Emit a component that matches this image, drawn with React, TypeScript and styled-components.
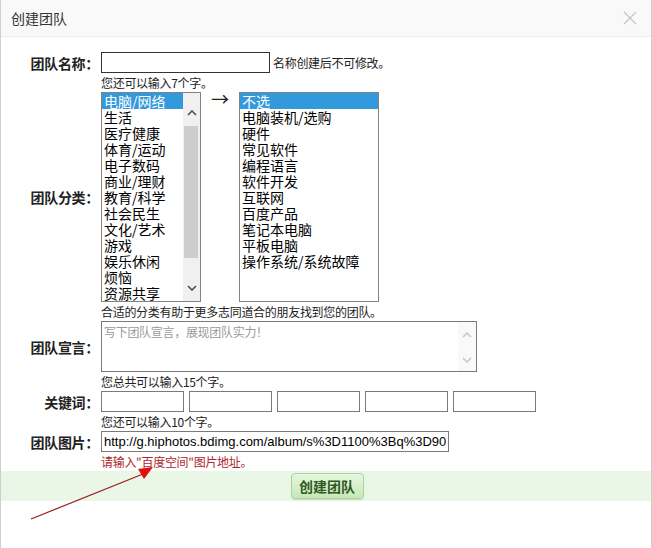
import React from "react";
import styled, { createGlobalStyle } from "styled-components";

const GlobalStyle = createGlobalStyle`
  html, body {
    margin: 0;
    padding: 0;
    background: #fff;
  }
  body {
    font-family: "Noto Sans CJK SC", "Liberation Sans", sans-serif;
    color: #000;
  }
`;

const leftItems = [
  "电脑/网络",
  "生活",
  "医疗健康",
  "体育/运动",
  "电子数码",
  "商业/理财",
  "教育/科学",
  "社会民生",
  "文化/艺术",
  "游戏",
  "娱乐休闲",
  "烦恼",
  "资源共享",
];

const rightItems = [
  "不选",
  "电脑装机/选购",
  "硬件",
  "常见软件",
  "编程语言",
  "软件开发",
  "互联网",
  "百度产品",
  "笔记本电脑",
  "平板电脑",
  "操作系统/系统故障",
];

const Dialog = styled.div`
  position: relative;
  width: 650px;
  min-height: 548px;
  border-left: 1px solid #cfcfcf;
  border-right: 1px solid #cfcfcf;
  background: #fff;
`;

const Header = styled.div`
  height: 36px;
  display: flex;
  align-items: center;
  justify-content: space-between;
  padding: 0 10px;
  background: #f9f9f9;
  border-bottom: 1px solid #ebebeb;
`;

const Title = styled.div`
  font-size: 14px;
  color: #333;
`;

const Close = styled.svg`
  width: 14px;
  height: 14px;
  margin-right: 4px;
`;

const Form = styled.div`
  display: grid;
  grid-template-columns: 100px auto;
  padding-top: 15px;
`;

const Label = styled.div`
  grid-column: 1;
  align-self: center;
  text-align: right;
  padding-right: 2px;
  font-size: 14px;
  font-weight: bold;
  color: #222;
  letter-spacing: -0.3px;
`;

const Cell = styled.div`
  grid-column: 2;
  display: flex;
  align-items: center;
`;

const Hint = styled.div<{ $error?: boolean }>`
  grid-column: 2;
  height: 19px;
  line-height: 19px;
  font-size: 12px;
  color: ${(p) => (p.$error ? "#b0262b" : "#222")};
  letter-spacing: -0.3px;
`;

const TextInput = styled.input<{ $w: number; $dark?: boolean }>`
  box-sizing: border-box;
  width: ${(p) => p.$w}px;
  height: 21px;
  margin: 0;
  padding: 0 2px;
  border: 1px solid ${(p) => (p.$dark ? "#333" : "#7a7a7a")};
  border-radius: 0;
  outline: none;
  font-family: "Liberation Sans", Arial, sans-serif;
  font-size: 13px;
  color: #000;
  background: #fff;
`;

const Note = styled.span`
  margin-left: 3px;
  font-size: 12px;
  color: #222;
  letter-spacing: -0.3px;
`;

const ListBox = styled.div<{ $w: number }>`
  box-sizing: border-box;
  width: ${(p) => p.$w}px;
  height: 210px;
  border: 1px solid #828282;
  display: flex;
  overflow: hidden;
  background: #fff;
`;

const Items = styled.div`
  flex: 1;
`;

const Item = styled.div<{ $selected?: boolean }>`
  height: 16px;
  line-height: 16px;
  padding-left: 2px;
  font-size: 14px;
  white-space: nowrap;
  color: ${(p) => (p.$selected ? "#fff" : "#000")};
  background: ${(p) => (p.$selected ? "#3399dd" : "transparent")};
`;

const Scrollbar = styled.div`
  width: 17px;
  display: flex;
  flex-direction: column;
  background: #f0f0f0;
`;

const ScrollEnd = styled.div<{ $h: number; $bottom?: boolean }>`
  height: ${(p) => p.$h}px;
  display: flex;
  justify-content: center;
  align-items: ${(p) => (p.$bottom ? "flex-start" : "flex-end")};
  padding: ${(p) => (p.$bottom ? "14px 0 0" : "0 0 10px")};
  box-sizing: border-box;
`;

const Thumb = styled.div`
  height: 132px;
  margin: 0 2px 0 1px;
  background: #cdcdcd;
`;

const Spacer = styled.div`
  flex: 1;
`;

const ArrowCol = styled.div`
  width: 38px;
  align-self: flex-start;
  text-align: center;
  font-family: "Noto Sans CJK SC", sans-serif;
  font-size: 18px;
  line-height: 12px;
  color: #222;
`;

const TextArea = styled.div`
  box-sizing: border-box;
  width: 376px;
  height: 51px;
  border: 1px solid #7a7a7a;
  display: flex;
`;

const Placeholder = styled.div`
  flex: 1;
  padding: 2px 2px;
  font-size: 12px;
  line-height: 16px;
  color: #9a9a9a;
  letter-spacing: -0.3px;
`;

const AreaScroll = styled.div`
  width: 18px;
  background: #f9f9f9;
  display: flex;
  flex-direction: column;
  justify-content: space-between;
  align-items: center;
  padding: 10px 0 8px;
`;

const Keywords = styled.div`
  display: flex;
  gap: 5px;
`;

const Footer = styled.div`
  height: 30px;
  display: flex;
  justify-content: center;
  align-items: center;
  background: #eaf7e6;
`;

const Button = styled.button`
  box-sizing: border-box;
  width: 73px;
  height: 26px;
  margin-left: 2px;
  border: 1px solid #a9d59c;
  border-radius: 4px;
  background: linear-gradient(#e6f6df, #c6e9b8);
  box-shadow: 0 1px 1px rgba(0, 0, 0, 0.12);
  font-family: "Noto Sans CJK SC", sans-serif;
  font-size: 14px;
  font-weight: bold;
  color: #2f5a1f;
  padding: 0;
`;

const Annotation = styled.svg`
  position: absolute;
  left: 0;
  top: 0;
  width: 652px;
  height: 548px;
  pointer-events: none;
`;

const Chevron = ({ up, color }: { up?: boolean; color: string }) => (
  <svg width="10" height="6" viewBox="0 0 10 6">
    <polyline
      points={up ? "1,5 5,1 9,5" : "1,1 5,5 9,1"}
      fill="none"
      stroke={color}
      strokeWidth="1.6"
    />
  </svg>
);

export default function App() {
  return (
    <Dialog>
      <GlobalStyle />
      <Header>
        <Title>创建团队</Title>
        <Close viewBox="0 0 14 14">
          <path d="M1 1 L13 13 M13 1 L1 13" stroke="#c4c4c4" strokeWidth="1.2" />
        </Close>
      </Header>
      <Form>
        <Label>团队名称：</Label>
        <Cell>
          <TextInput $w={169} $dark readOnly defaultValue="" />
          <Note>名称创建后不可修改。</Note>
        </Cell>
        <Hint>您还可以输入7个字。</Hint>

        <Label>团队分类：</Label>
        <Cell>
          <ListBox $w={100}>
            <Items>
              {leftItems.map((t, i) => (
                <Item key={t} $selected={i === 0}>
                  {t}
                </Item>
              ))}
            </Items>
            <Scrollbar>
              <ScrollEnd $h={33}>
                <Chevron up color="#505050" />
              </ScrollEnd>
              <Thumb />
              <Spacer />
              <ScrollEnd $h={30} $bottom>
                <Chevron color="#505050" />
              </ScrollEnd>
            </Scrollbar>
          </ListBox>
          <ArrowCol>→</ArrowCol>
          <ListBox $w={140}>
            <Items>
              {rightItems.map((t, i) => (
                <Item key={t} $selected={i === 0}>
                  {t}
                </Item>
              ))}
            </Items>
          </ListBox>
        </Cell>
        <Hint>合适的分类有助于更多志同道合的朋友找到您的团队。</Hint>

        <Label>团队宣言：</Label>
        <Cell>
          <TextArea>
            <Placeholder>写下团队宣言，展现团队实力！</Placeholder>
            <AreaScroll>
              <Chevron up color="#c8c8c8" />
              <Chevron color="#c8c8c8" />
            </AreaScroll>
          </TextArea>
        </Cell>
        <Hint>您总共可以输入15个字。</Hint>

        <Label>关键词：</Label>
        <Cell>
          <Keywords>
            {[0, 1, 2, 3, 4].map((k) => (
              <TextInput key={k} $w={83} readOnly defaultValue="" />
            ))}
          </Keywords>
        </Cell>
        <Hint>您还可以输入10个字。</Hint>

        <Label>团队图片：</Label>
        <Cell>
          <TextInput
            $w={348}
            readOnly
            defaultValue="http://g.hiphotos.bdimg.com/album/s%3D1100%3Bq%3D90/sign=3a"
          />
        </Cell>
        <Hint $error>请输入"百度空间"图片地址。</Hint>
      </Form>
      <Footer>
        <Button type="button">创建团队</Button>
      </Footer>
      <Annotation viewBox="0 0 652 548">
        <line x1="30" y1="519" x2="142" y2="474" stroke="#9e1b1b" strokeWidth="1.2" />
        <polygon points="152,467 137,469 143,479" fill="#e01010" />
      </Annotation>
    </Dialog>
  );
}
